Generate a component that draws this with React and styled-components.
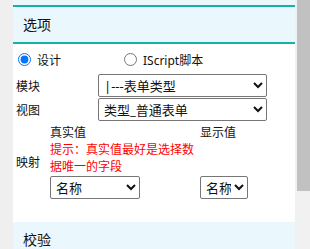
import React from "react";
import styled, { createGlobalStyle } from "styled-components";

const GlobalStyle = createGlobalStyle`
  html, body {
    margin: 0;
    padding: 0;
    overflow: hidden;
    background: #fff;
  }
  body {
    font-family: "Noto Sans", "Noto Sans CJK SC", sans-serif;
    color: #111;
  }
`;

const Page = styled.div`
  display: flex;
  width: 310px;
  height: 249px;
  overflow: hidden;
`;

const Gutter = styled.div`
  width: 13px;
  flex: none;
  background: #efefef;
`;

const Main = styled.div`
  width: 282px;
  flex: none;
  display: flex;
  flex-direction: column;
  overflow: hidden;
`;

const Scrollbar = styled.div`
  width: 15px;
  flex: none;
  background: #f1f1f1;
  display: flex;
  justify-content: flex-end;
`;

const Thumb = styled.div`
  width: 13px;
  height: 191px;
  background: #c1c1c1;
`;

const TopStrip = styled.div`
  height: 5px;
  flex: none;
  background: #eaf7fc;
`;

const Header = styled.div`
  box-sizing: border-box;
  height: ${(p) => (p.$active ? "39px" : "auto")};
  padding: ${(p) => (p.$active ? "0 10px" : "9px 10px 0")};
  display: flex;
  align-items: ${(p) => (p.$active ? "center" : "flex-start")};
  background: #eaf7fc;
  border-top: ${(p) => (p.$active ? "2px solid #15b3a4" : "none")};
  border-bottom: ${(p) => (p.$active ? "2px solid #15b3a4" : "none")};
  font-size: 14px;
  line-height: 18px;
  flex: ${(p) => (p.$active ? "none" : "1 0 auto")};
`;

const Body = styled.div`
  flex: none;
  height: 178px;
  box-sizing: border-box;
  background: #fff;
`;

const RadioRow = styled.div`
  display: flex;
  height: 29px;
  align-items: center;
  font-size: 12px;
  padding-top: 1px;
`;

const RadioLabel = styled.label`
  display: flex;
  align-items: center;
  width: ${(p) => p.$w || "auto"};

  input {
    margin: 0 6px 0 5px;
    width: 13px;
    height: 13px;
    accent-color: #0075ff;
  }
`;

const FieldRow = styled.div`
  display: flex;
  align-items: center;
  padding-left: 3px;
  margin-bottom: 1px;
  font-size: 12px;
`;

const FieldLabel = styled.span`
  width: ${(p) => p.$w};
  flex: none;
`;

const Select = styled.select`
  box-sizing: border-box;
  height: 23px;
  width: ${(p) => p.$w || "169px"};
  flex: none;
  border: 1px solid #767676;
  border-radius: 2px;
  background: #fff;
  color: #111;
  font-family: "Noto Sans", "Noto Sans CJK SC", sans-serif;
  font-size: 13px;
  padding: 0 0 0 1px;
  margin: 0;
`;

const MapRow = styled.div`
  display: flex;
  align-items: center;
  padding-left: 3px;
  padding-top: 2px;
  font-size: 12px;
`;

const MapCol = styled.div`
  width: ${(p) => p.$w};
  flex: none;
  display: flex;
  flex-direction: column;
  align-items: flex-start;
  justify-content: space-between;
  align-self: stretch;
  line-height: 17px;
`;

const Hint = styled.div`
  width: 150px;
  color: #ff0000;
  line-height: 17px;
  padding-bottom: 1px;
  word-break: break-all;
`;

export default function App() {
  return (
    <>
      <GlobalStyle />
      <Page>
        <Gutter />
        <Main>
          <TopStrip />
          <Header $active>选项</Header>
          <Body>
            <RadioRow>
              <RadioLabel $w="106px">
                <input type="radio" name="mode" defaultChecked />
                设计
              </RadioLabel>
              <RadioLabel>
                <input type="radio" name="mode" />
                IScript脚本
              </RadioLabel>
            </RadioRow>
            <FieldRow>
              <FieldLabel $w="82px">模块</FieldLabel>
              <Select defaultValue="form">
                <option value="form">|---表单类型</option>
              </Select>
            </FieldRow>
            <FieldRow>
              <FieldLabel $w="82px">视图</FieldLabel>
              <Select defaultValue="normal">
                <option value="normal">类型_普通表单</option>
              </Select>
            </FieldRow>
            <MapRow>
              <FieldLabel $w="34px">映射</FieldLabel>
              <MapCol $w="150px">
                <span>真实值</span>
                <Hint>提示：真实值最好是选择数据唯一的字段</Hint>
                <Select $w="90px" defaultValue="name">
                  <option value="name">名称</option>
                </Select>
              </MapCol>
              <MapCol $w="80px">
                <span>显示值</span>
                <Select $w="48px" defaultValue="name">
                  <option value="name">名称</option>
                </Select>
              </MapCol>
            </MapRow>
          </Body>
          <Header>校验</Header>
        </Main>
        <Scrollbar>
          <Thumb />
        </Scrollbar>
      </Page>
    </>
  );
}
